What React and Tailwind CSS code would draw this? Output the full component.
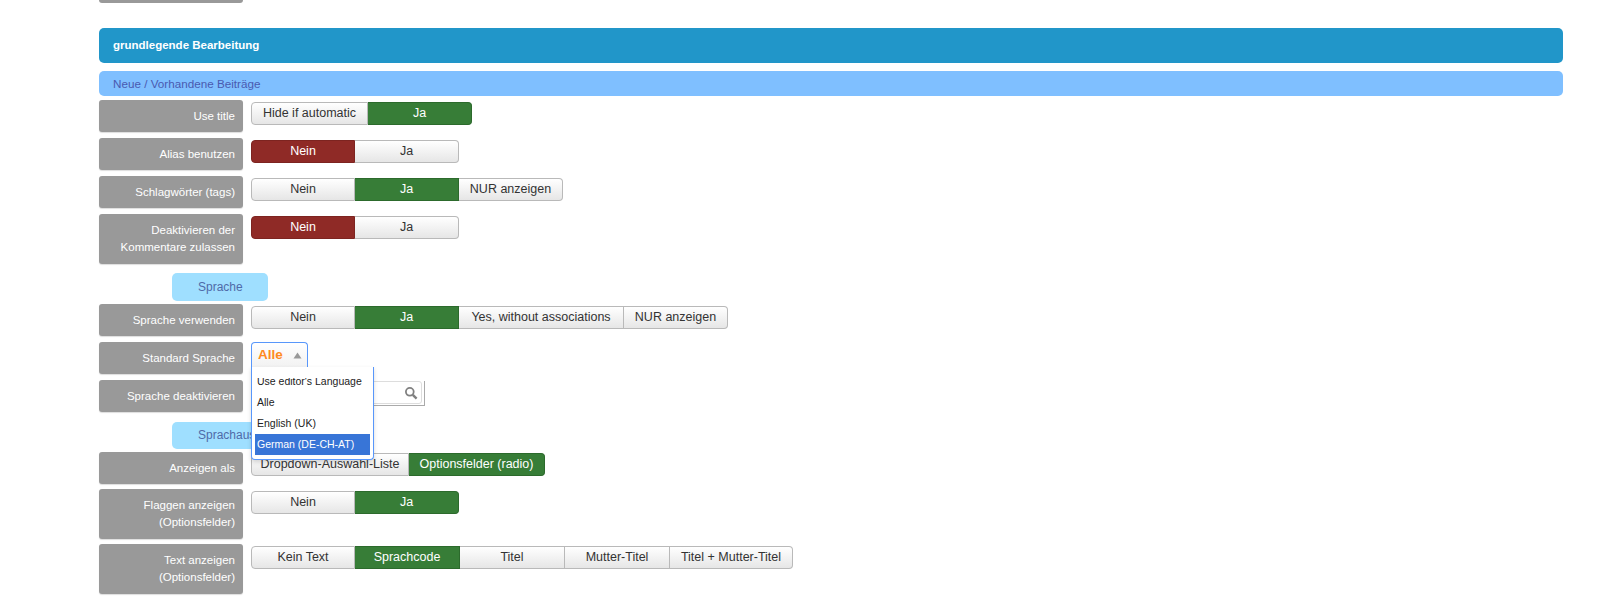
import React from "react";

const ON_GREEN = "on";
const ON_RED = "off";

const Toggle = ({ items, active, tone = ON_GREEN, widths, className = "mt-[2px]" }) => {
  return (
    <div className={`flex h-[23px] ${className}`}>
      {items.map((item, i) => {
        const isOn = i === active;
        const first = i === 0;
        const last = i === items.length - 1;
        return (
          <div
            key={item}
            style={{ width: widths ? widths[i] : 104 }}
            className={`flex items-center justify-center whitespace-nowrap border-y border-r pb-px text-[12.5px] ${first ? "rounded-l-[4px] border-l" : ""} ${last ? "rounded-r-[4px]" : ""} ${
              isOn
                ? tone === ON_RED
                  ? "border-[#7d2420] bg-[#8f2a26] text-white"
                  : "border-[#2c6a2c] bg-[#377d37] text-white"
                : "border-[#b9b9b9] bg-gradient-to-b from-white to-[#e6e6e6] text-[#333]"
            }`}
          >
            {item}
          </div>
        );
      })}
    </div>
  );
};

const Label = ({ children, tall }) => (
  <div className={`w-[144px] shrink-0 rounded-[3px] bg-[#999] pr-[8px] pt-[8px] text-right text-[11.5px] leading-[17px] text-white shadow-[0_1px_1px_#ddd] ${tall ? "h-[50px]" : "h-8"}`}>
    {children}
  </div>
);

const Row = ({ label, tall, className = "mb-[6px]", children }) => (
  <div className={`flex gap-[8px] ${className}`}>
    <Label tall={tall}>{label}</Label>
    <div>{children}</div>
  </div>
);

const Pill = ({ children, className }) => (
  <div className={`ml-[73px] w-[96px] overflow-hidden whitespace-nowrap rounded-[5px] bg-[#9fdfff] pl-[26px] text-[12px] text-[#4f6aa8] ${className}`}>
    {children}
  </div>
);

const SearchIcon = () => (
  <svg width="14" height="14" viewBox="0 0 14 14" fill="none" stroke="#808080" strokeWidth="1.8">
    <circle cx="5.8" cy="5.8" r="3.9" />
    <path d="M8.8 8.8 L12.6 12.6" strokeWidth="2.4" />
  </svg>
);

const LanguageSelect = () => {
  const options = ["Use editor's Language", "Alle", "English (UK)", "German (DE-CH-AT)"];
  return (
    <div className="relative z-10 w-[57px]">
      <div className="flex h-[32px] items-start gap-[10px] rounded-t-[4px] border border-b-0 border-[#5897fb] bg-gradient-to-b from-white to-[#eee] pl-[6px] pt-[2px] text-[13.5px] font-bold text-[#ff8a1f]">
        Alle
        <svg width="9" height="7" viewBox="0 0 9 7" className="mt-[7px]">
          <path d="M4.5 0.5 L8.5 6.5 L0.5 6.5 Z" fill="#999" />
        </svg>
      </div>
      <div className="absolute left-0 top-[25px] h-[93px] w-[123px] rounded-b-[4px] border border-t-0 border-[#5897fb] bg-white px-[3px] pt-[11px] text-[10.5px] text-[#222] shadow-[0_2px_4px_rgba(0,0,0,0.15)]">
        <div className="overflow-hidden">
          {options.map((option, i) => (
            <div
              key={option}
              className={`flex h-[21px] items-center whitespace-nowrap pl-[2px] ${i === 0 ? "mt-[-7px]" : ""} ${i === 3 ? "bg-[#3875d7] text-white" : ""}`}
            >
              {option}
            </div>
          ))}
        </div>
      </div>
    </div>
  );
};

const App = () => {
  return (
    <div className="h-[598px] overflow-hidden bg-white pl-[99px] pr-[37px] font-['Liberation_Sans',Arial,sans-serif]">
      <div className="h-[3px] w-[144px] rounded-b-[3px] bg-[#999]" />

      <div className="mt-[25px] flex h-[35px] items-center rounded-[5px] bg-[#2196c9] pl-[14px] pt-px text-[11.5px] font-bold text-white">
        grundlegende Bearbeitung
      </div>
      <div className="mt-[8px] flex h-[25px] items-center rounded-[5px] bg-[#7fbfff] pl-[14px] text-[11.7px] text-[#4a5ab0]">
        Neue / Vorhandene Beiträge
      </div>

      <div className="mt-[4px]">
        <Row label="Use title">
          <Toggle items={["Hide if automatic", "Ja"]} active={1} widths={[117, 104]} />
        </Row>
        <Row label="Alias benutzen">
          <Toggle items={["Nein", "Ja"]} active={0} tone={ON_RED} />
        </Row>
        <Row label="Schlagwörter (tags)">
          <Toggle items={["Nein", "Ja", "NUR anzeigen"]} active={1} />
        </Row>
        <Row label={<>Deaktivieren der<br />Kommentare zulassen</>} tall className="mb-[9px]">
          <Toggle items={["Nein", "Ja"]} active={0} tone={ON_RED} />
        </Row>

        <Pill className="mb-[3px] h-[28px] leading-[28px]">Sprache</Pill>

        <Row label="Sprache verwenden">
          <Toggle items={["Nein", "Ja", "Yes, without associations", "NUR anzeigen"]} active={1} widths={[104, 104, 165, 104]} />
        </Row>
        <Row label="Standard Sprache">
          <LanguageSelect />
        </Row>
        <Row label="Sprache deaktivieren" className="mb-[10px]">
          {/* outer frame has no top edge, only the inner field does */}
          <div className="mt-[1px] h-[25px] w-[174px] border-r border-b border-[#aaa] pr-[2px]">
            <div className="flex h-[23px] w-full items-center justify-end rounded-[3px] border border-[#ddd] pr-[3px]">
              <SearchIcon />
            </div>
          </div>
        </Row>

        <Pill className="mb-[3px] h-[27px] leading-[27px]">Sprachauswahl</Pill>

        <Row label="Anzeigen als" className="mb-[5px]">
          <Toggle items={["Dropdown-Auswahl-Liste", "Optionsfelder (radio)"]} active={1} widths={[158, 136]} className="mt-px" />
        </Row>
        <Row label={<>Flaggen anzeigen<br />(Optionsfelder)</>} tall className="mb-[5px]">
          <Toggle items={["Nein", "Ja"]} active={1} />
        </Row>
        <Row label={<>Text anzeigen<br />(Optionsfelder)</>} tall>
          <Toggle items={["Kein Text", "Sprachcode", "Titel", "Mutter-Titel", "Titel + Mutter-Titel"]} active={1} widths={[104, 105, 105, 105, 123]} />
        </Row>
      </div>
    </div>
  );
};

export default App;
